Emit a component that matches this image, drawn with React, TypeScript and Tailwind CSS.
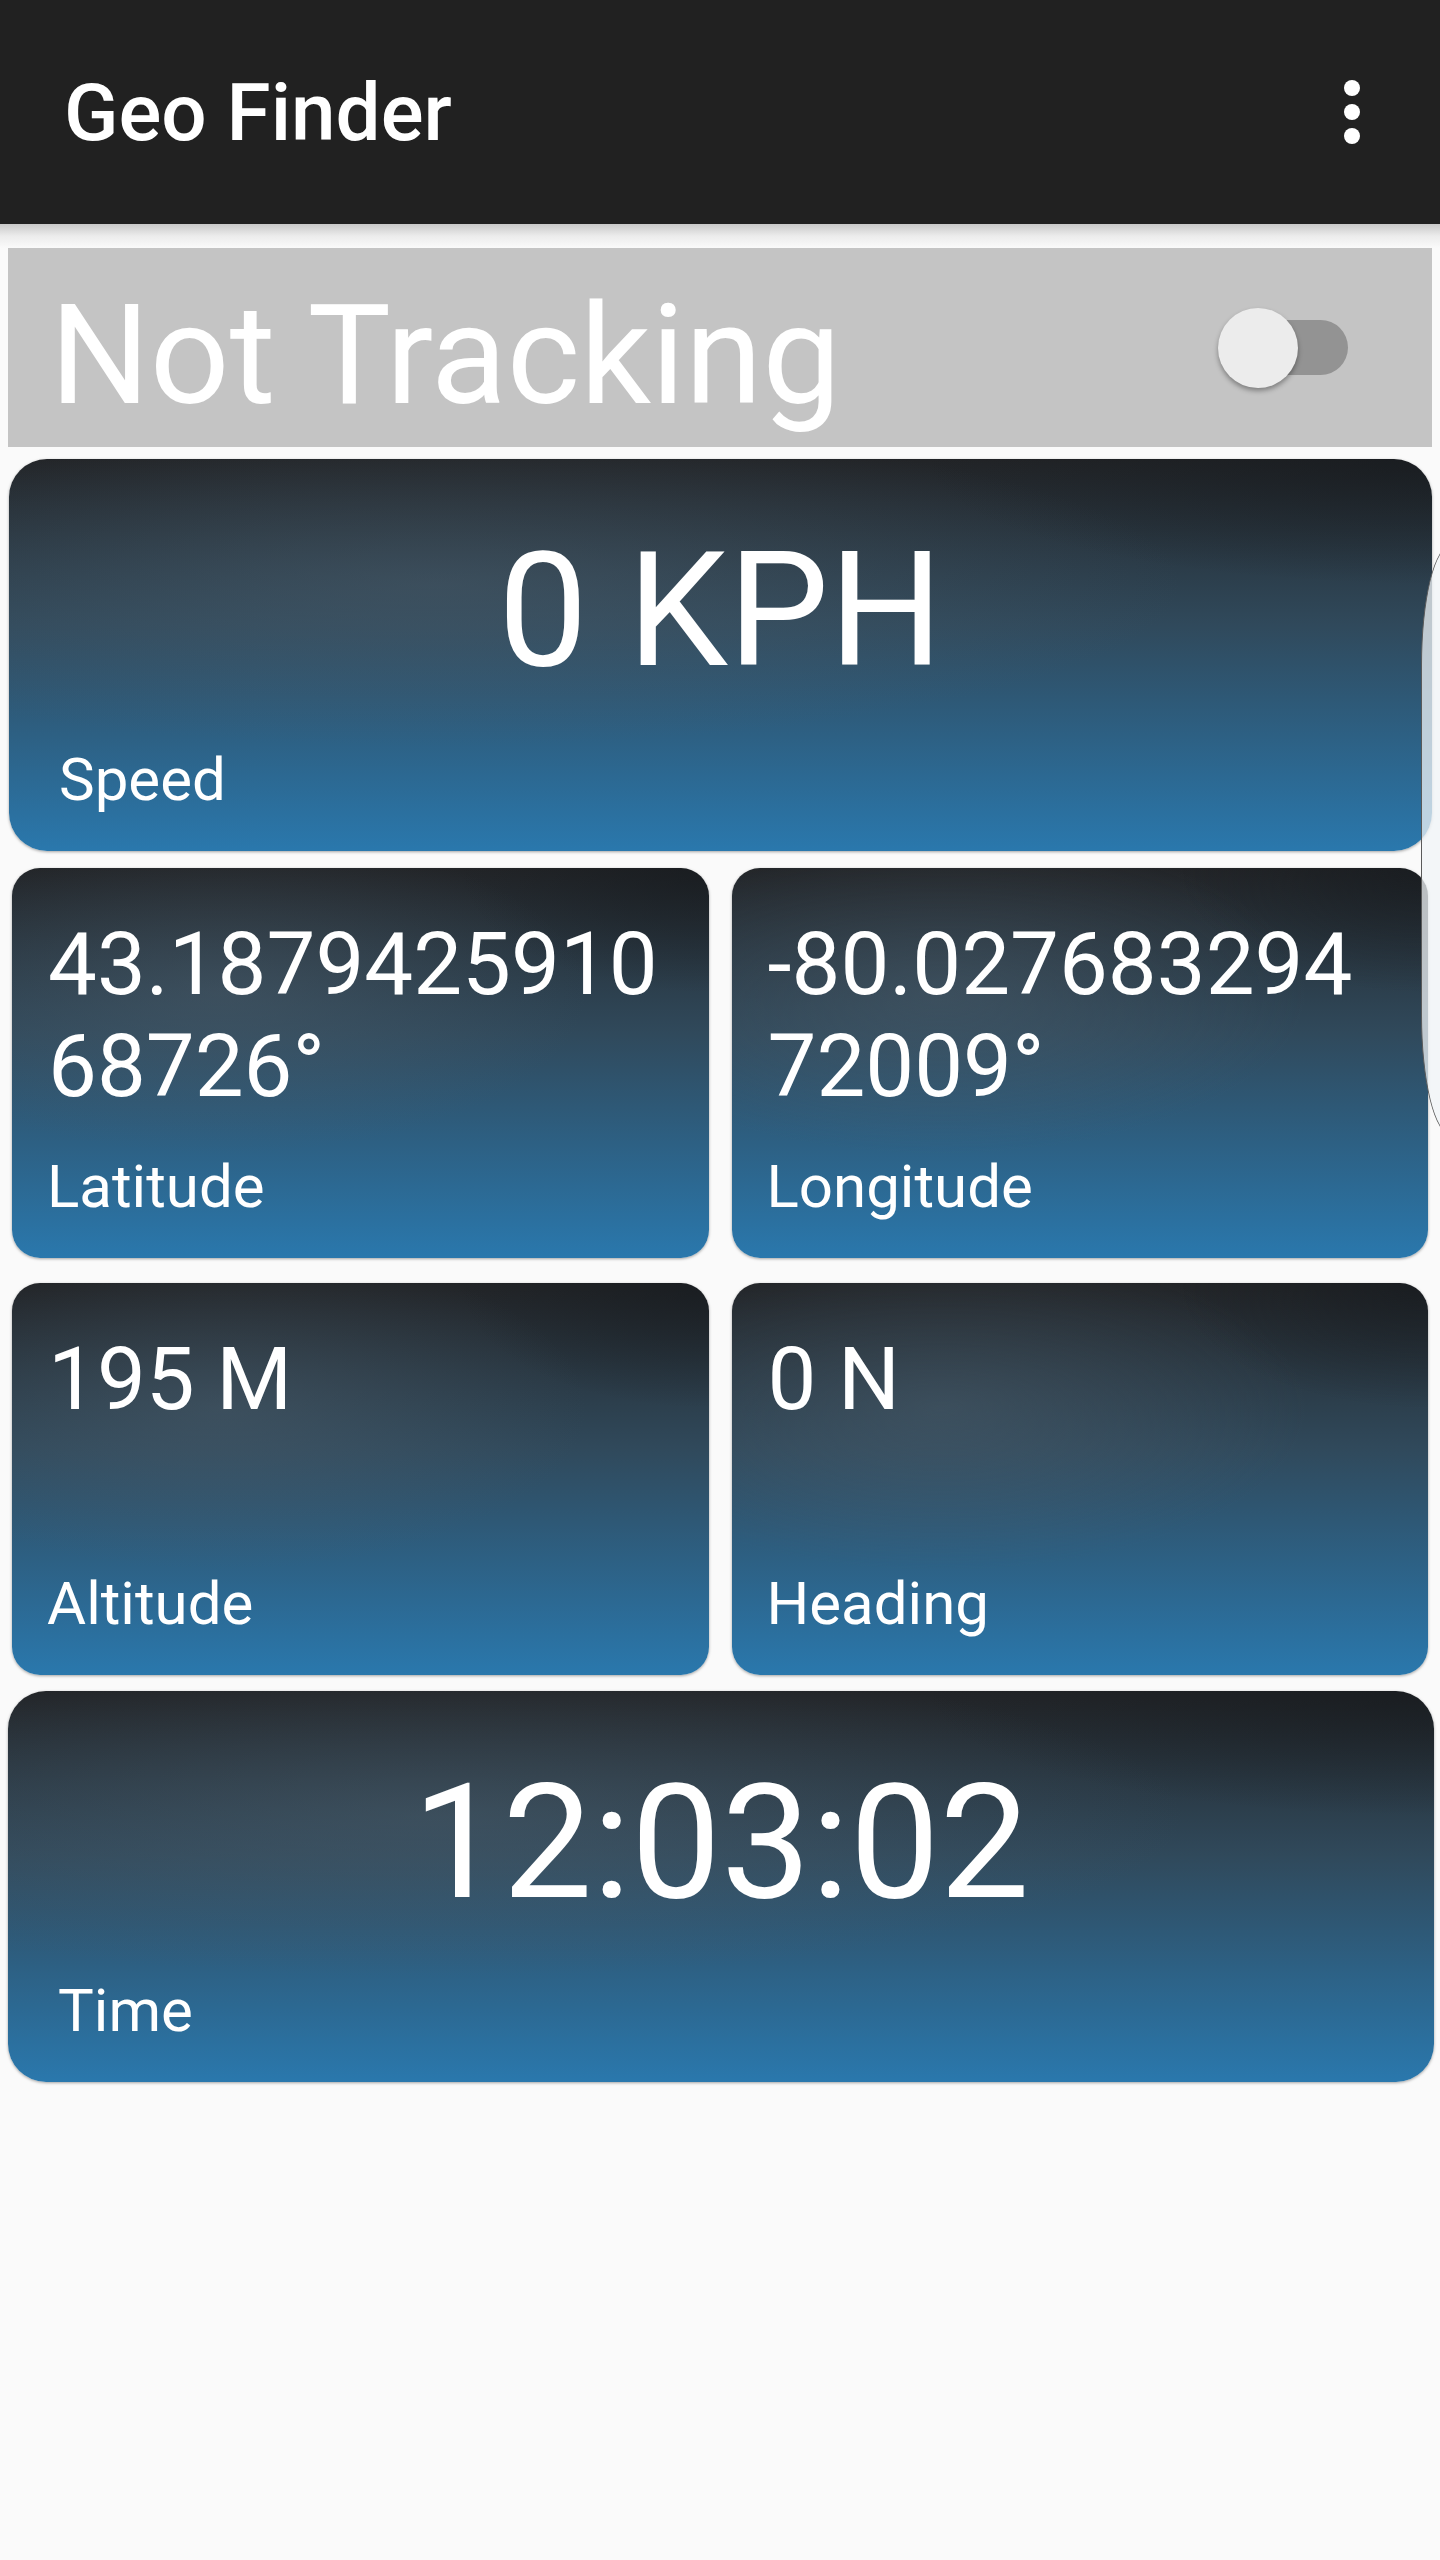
import { ReactNode } from "react";

interface CardProps {
  value: ReactNode;
  label: string;
  wide?: boolean;
  className?: string;
}

const cardBg =
  "bg-[radial-gradient(ellipse_70%_55%_at_30%_32%,rgba(78,96,110,0.45),transparent_75%),radial-gradient(ellipse_45%_40%_at_100%_0%,rgba(20,24,28,0.6),transparent_80%),linear-gradient(180deg,#222427_0%,#30495b_42%,#2a78ad_100%)]";

const Card = ({ value, label, wide, className }: CardProps) => {
  return (
    <div
      className={`${cardBg} ${className ?? ""} flex flex-col justify-between text-white shadow-[0_1px_3px_rgba(0,0,0,0.35)]`}
    >
      {wide ? (
        <div className="pt-[58px] text-center text-[160px] leading-[1.17]">{value}</div>
      ) : (
        <div className="pt-[46px] pl-[36px] pr-[36px] text-[87px] leading-[1.17] break-all">
          {value}
        </div>
      )}
      <div
        className={`${wide ? "pl-[50px]" : "pl-[35px]"} pb-[36px] text-[60px] leading-[1.17]`}
      >
        {label}
      </div>
    </div>
  );
};

const App = () => {
  return (
    <div className="relative min-h-screen w-[1440px] bg-[#fafafa] font-['Roboto','Liberation_Sans',sans-serif]">
      <header className="flex h-[224px] items-center justify-between bg-[#212121] pl-[64px] pr-[80px]">
        <h1 className="mt-[4px] text-[80px] font-medium leading-[1.17] text-white">Geo Finder</h1>
        <div className="flex flex-col gap-[8px]">
          <span className="h-[16px] w-[16px] rounded-full bg-white" />
          <span className="h-[16px] w-[16px] rounded-full bg-white" />
          <span className="h-[16px] w-[16px] rounded-full bg-white" />
        </div>
      </header>
      <div className="h-[24px] bg-gradient-to-b from-[#c9c9c9] via-[#ececec] to-[#fafafa]" />

      <section className="ml-[8px] flex h-[199px] w-[1424px] items-center justify-between bg-[#c4c4c4] pl-[42px] pr-[84px]">
        <span className="mt-[16px] text-[140px] leading-[1.17] text-white">Not Tracking</span>
        <div className="relative h-[80px] w-[130px]">
          <div className="absolute right-0 top-[12px] h-[55px] w-[108px] rounded-full bg-[#939393]" />
          <div className="absolute left-0 top-0 h-[80px] w-[80px] rounded-full bg-[#ececec] shadow-[0_3px_5px_rgba(0,0,0,0.35)]" />
        </div>
      </section>

      <Card
        wide
        value="0 KPH"
        label="Speed"
        className="ml-[9px] mt-[12px] h-[392px] w-[1423px] rounded-[38px]"
      />

      <div className="mt-[17px] flex gap-[23px] px-[12px]">
        <Card
          value="43.187942591068726°"
          label="Latitude"
          className="h-[390px] w-[697px] rounded-[28px]"
        />
        <Card
          value="-80.02768329472009°"
          label="Longitude"
          className="h-[390px] w-[697px] rounded-[28px]"
        />
      </div>

      <div className="mt-[25px] flex gap-[23px] px-[12px]">
        <Card value="195 M" label="Altitude" className="h-[392px] w-[697px] rounded-[28px]" />
        <Card value="0 N" label="Heading" className="h-[392px] w-[697px] rounded-[28px]" />
      </div>

      <Card
        wide
        value="12:03:02"
        label="Time"
        className="ml-[8px] mt-[16px] h-[391px] w-[1426px] rounded-[38px]"
      />

      <div className="h-[477px]" />

      {/* overscroll edge peeking in from the right */}
      <div className="absolute left-[1421px] top-[545px] h-[590px] w-[60px] rounded-bl-[30px_120px] rounded-tl-[30px_120px] border-[1.5px] border-[#5a5a5a] bg-[rgba(240,244,247,0.75)]" />
    </div>
  );
};

export default App;
